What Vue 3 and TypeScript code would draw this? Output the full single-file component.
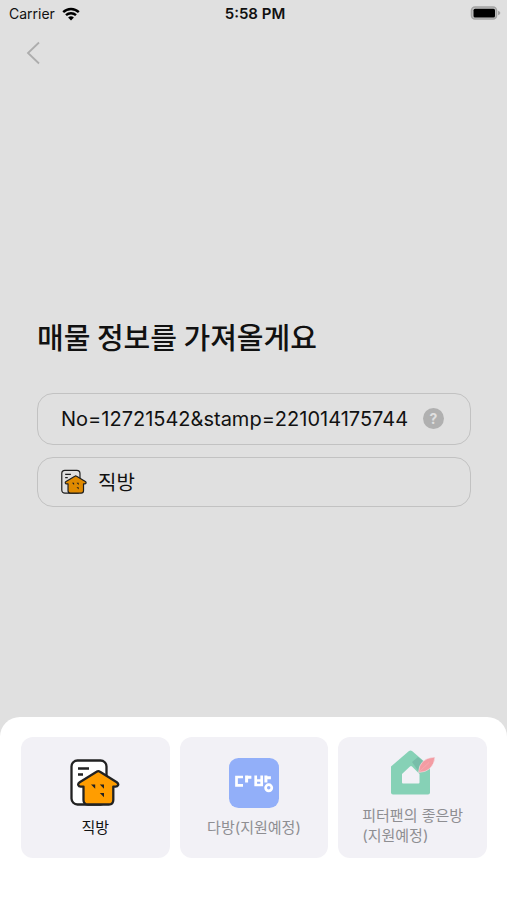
<script setup lang="ts">
import { ref } from 'vue'

type Source = 'zigbang' | 'dabang' | 'peterpan'

interface Option {
  id: Source
  lines: string[]
  supported: boolean
}

const listing = ref('No=12721542&stamp=221014175744')
const selected = ref<Source>('zigbang')

const options: Option[] = [
  { id: 'zigbang', lines: ['직방'], supported: true },
  { id: 'dabang', lines: ['다방(지원예정)'], supported: false },
  { id: 'peterpan', lines: ['피터팬의 좋은방', '(지원예정)'], supported: false },
]
</script>

<template>
  <div class="screen">
    <header class="status">
      <div class="carrier">
        <span>Carrier</span>
        <svg class="wifi" viewBox="0 0 18 14" aria-hidden="true">
          <path d="M1.2 5.2a11.2 11.2 0 0 1 15.6 0" />
          <path d="M4 8.2a7.2 7.2 0 0 1 10 0" />
          <path class="dot" d="M9 13.6l-2.9-3a4.1 4.1 0 0 1 5.8 0z" />
        </svg>
      </div>
      <span class="time">5:58 PM</span>
      <div class="power">
        <svg class="battery" viewBox="0 0 31 15" aria-hidden="true">
          <rect x="1.5" y="1" width="25" height="12" rx="3.5" fill="#c4c4c4" stroke="#a3a3a3" stroke-width="1.6" />
          <rect x="3.5" y="2.8" width="21.5" height="8.6" rx="1.5" fill="#000" />
          <path d="M28 4.7q2.4.8 2.4 2.3t-2.4 2.3z" fill="#a3a3a3" />
        </svg>
      </div>
    </header>

    <nav class="nav">
      <button class="back" type="button" aria-label="뒤로">
        <svg viewBox="0 0 14 24" aria-hidden="true"><path d="M13 1.5L2 12l11 10.5" /></svg>
      </button>
    </nav>

    <main class="content">
      <h1>매물 정보를 가져올게요</h1>
      <div class="field">
        <input v-model="listing" type="text" aria-label="매물 정보" />
        <button class="help" type="button" aria-label="도움말">?</button>
      </div>
      <button class="field picker" type="button">
        <svg class="picker-icon" viewBox="0 0 50 50" aria-hidden="true"><use href="#zigbang-mark" /></svg>
        <span>직방</span>
      </button>
    </main>

    <section class="sheet">
      <button
        v-for="option in options"
        :key="option.id"
        class="card"
        :class="{ pending: !option.supported }"
        type="button"
        :aria-pressed="selected === option.id"
        :disabled="!option.supported"
        @click="selected = option.id"
      >
        <svg v-if="option.id === 'zigbang'" class="logo" viewBox="0 0 50 50" aria-hidden="true">
          <g id="zigbang-mark" stroke="#222" stroke-width="2.3" stroke-linejoin="round" stroke-linecap="round">
            <rect x="1.5" y="2.5" width="35" height="44" rx="6" fill="#fff" />
            <path d="M8 10.5h11M8 16.5h5" fill="none" stroke-linecap="butt" />
            <path
              d="M26.6 13.8q1.7-1.2 3.4 0l16.8 10.4q2 1.4 1.2 3.1-.7 1.5-2.7 1.4l-2-.1v13.4q0 4.500-4.500 4.500H18q-4.500 0-4.500-4.500V28.6l-2.600.1q-2 .1-2.600-1.500-.6-1.700 1.400-3z"
              fill="#ff9d00"
            />
            <path d="M21 26.5h4.2v4.3zM29.8 26.5H34v4.3zM29.8 35H34v4.3z" fill="#222" stroke="none" />
          </g>
        </svg>
        <svg v-else-if="option.id === 'dabang'" class="logo" viewBox="0 0 50 50" aria-hidden="true">
          <rect width="50" height="50" rx="9.5" fill="#92aff9" />
          <g fill="none" stroke="#fff" stroke-width="2.7">
            <path d="M14 19H7.500v8.300H14" />
            <path d="M17.600 24.500v-7M17.600 19.200h4.800" stroke-width="3" />
            <path d="M26.700 17.500v9.500h6v-9.500M26.700 22.500h6" />
            <path d="M36.900 24.500v-7M36.900 19.800h5" stroke-width="3" />
            <circle cx="39.700" cy="29.800" r="3.100" />
          </g>
        </svg>
        <svg v-else class="logo tall" viewBox="0 0 46 46" aria-hidden="true">
          <path d="M1 16.5L19 1q1.5-1.2 3 0L40 16.500v26q0 2-2 2H3q-2 0-2-2z" fill="#86d1b6" />
          <path d="M22 12l6-5 7 6-6 9z" fill="#78bda9" />
          <path d="M12 24l8-7.500q1-.9 2 0l7.500 7.500v8.500q0 1-1 1H13q-1 0-1-1z" fill="#f2f1f6" />
          <path d="M28.500 22.500Q29 8 45 7 43.500 22 28.500 22.500z" fill="#f39ca3" stroke="#f2f1f6" stroke-width=".5" />
          <path d="M29 22L39 12.500" fill="none" stroke="#f7b4b9" stroke-width=".6" />
        </svg>
        <span class="label">
          <span v-for="line in option.lines" :key="line">{{ line }}</span>
        </span>
      </button>
    </section>
  </div>
</template>

<style>
body {
  margin: 0;
  background: #e0e0e0;
}
</style>

<style scoped>
.screen {
  display: flex;
  flex-direction: column;
  min-height: 100vh;
  background: #e0e0e0;
  color: #111;
  font-family: Inter, 'Noto Sans CJK KR', sans-serif;
}

button,
input {
  margin: 0;
  padding: 0;
  border: 0;
  background: none;
  color: inherit;
  font: inherit;
}

.status {
  display: grid;
  grid-template-columns: 1fr auto 1fr;
  align-items: center;
  height: 27px;
  padding: 0 6px 0 9px;
  font-size: 15px;
}

.carrier {
  display: flex;
  align-items: center;
  gap: 7px;
  font-size: 14px;
}

.wifi {
  width: 18px;
  height: 14px;
  fill: none;
  stroke: #000;
  stroke-width: 2.4;
}

.wifi .dot {
  fill: #000;
  stroke: none;
}

.time {
  font-weight: 600;
}

.power {
  display: flex;
  justify-content: flex-end;
}

.battery {
  width: 31px;
  height: 15px;
}

.nav {
  display: flex;
  align-items: center;
  height: 51px;
  padding: 0 26px;
}

.back {
  display: flex;
}

.back svg {
  width: 14px;
  height: 24px;
  fill: none;
  stroke: #adadad;
  stroke-width: 1.8;
}

.content {
  display: flex;
  flex: 1;
  flex-direction: column;
  justify-content: center;
  gap: 12px;
  padding: 27px 36px 0 37px;
}

h1 {
  margin: 0 0 25px;
  font-family: 'Noto Sans CJK KR', sans-serif;
  font-size: 29px;
  font-weight: 500;
  line-height: 40px;
}

.field {
  display: flex;
  align-items: center;
  box-sizing: border-box;
  width: 100%;
  height: 52px;
  padding: 0 26px 0 23px;
  border: 1px solid #c2c2c2;
  border-radius: 16px;
  font-size: 20px;
}

.field input {
  flex: 1;
  min-width: 0;
  outline: none;
}

.help {
  flex: none;
  width: 21px;
  height: 21px;
  border-radius: 50%;
  background: #b0b0b0;
  color: #e0e0e0;
  font-size: 14px;
  font-weight: 700;
  line-height: 21px;
  text-align: center;
}

.picker {
  gap: 11px;
  height: 50px;
}

.picker-icon {
  width: 26px;
  height: 26px;
  filter: brightness(0.88);
}

.sheet {
  display: grid;
  grid-template-columns: repeat(3, 1fr);
  gap: 10px;
  padding: 20px 20px 42px 21px;
  border-radius: 20px 20px 0 0;
  background: #fff;
}

.card {
  display: flex;
  flex-direction: column;
  align-items: center;
  justify-content: center;
  gap: 10px;
  height: 121px;
  border-radius: 12px;
  background: #f2f1f6;
  font-size: 15px;
  line-height: 20px;
}

.pending {
  color: #8e8e92;
}

.logo {
  width: 50px;
  height: 50px;
}

.tall {
  width: 46px;
  height: 46px;
}

.label {
  display: flex;
  flex-direction: column;
  text-align: left;
}
</style>
